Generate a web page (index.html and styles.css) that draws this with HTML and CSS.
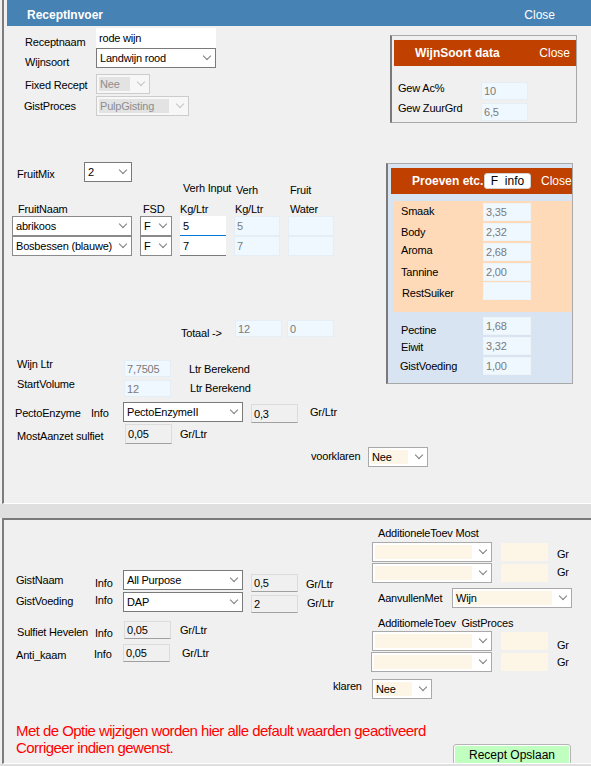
FILE: index.html
```html
<!DOCTYPE html>
<html>
<head>
<meta charset="utf-8">
<title>ReceptInvoer</title>
<link rel="stylesheet" href="styles.css">
</head>
<body>
<div class="window top">
  <div class="titlebar"><span class="title">ReceptInvoer</span><span class="close">Close</span></div>

  <div class="row row-naam">
    <span class="lbl l-naam">Receptnaam</span>
    <div class="tb tb-white w120">rode wijn</div>
  </div>
  <div class="row row-soort">
    <span class="lbl l-soort">Wijnsoort</span>
    <div class="cb w120"><span class="cb-text">Landwijn rood</span></div>
  </div>
  <div class="row row-fixed">
    <span class="lbl l-fixed">Fixed Recept</span>
    <div class="cb cb-dis w54"><span class="cb-text">Nee</span></div>
  </div>
  <div class="row row-gist">
    <span class="lbl l-gist">GistProces</span>
    <div class="cb cb-dis w93"><span class="cb-text">PulpGisting</span></div>
  </div>

  <div class="row row-mix">
    <span class="lbl l-mix">FruitMix</span>
    <div class="cb w48"><span class="cb-text">2</span></div>
  </div>

  <div class="fruit-grid">
    <div></div><div></div>
    <div class="gh1 gh-verhinput">Verh Input</div>
    <div class="gh1 gh-verh">Verh</div>
    <div class="gh1 gh-fruit">Fruit</div>

    <div class="gh2 gh-naam">FruitNaam</div>
    <div class="gh2 gh-fsd">FSD</div>
    <div class="gh2">Kg/Ltr</div>
    <div class="gh2 gh-kg2">Kg/Ltr</div>
    <div class="gh2 gh-water">Water</div>

    <div class="cb cb-fruit"><span class="cb-text">abrikoos</span></div>
    <div class="cb cb-fruit"><span class="cb-text">F</span></div>
    <div class="tb tb-focus">5</div>
    <div class="tb tb-ro">5</div>
    <div class="tb tb-ro"></div>

    <div class="cb cb-fruit"><span class="cb-text">Bosbessen (blauwe)</span></div>
    <div class="cb cb-fruit"><span class="cb-text">F</span></div>
    <div class="tb tb-under">7</div>
    <div class="tb tb-ro">7</div>
    <div class="tb tb-ro"></div>
  </div>

  <div class="row row-totaal">
    <span class="lbl l-totaal">Totaal -&gt;</span>
    <div class="tb tb-ro w47 h17">12</div>
    <div class="tb tb-ro w47 h17 gap5">0</div>
  </div>

  <div class="row row-wijn">
    <span class="lbl l-wijn">Wijn Ltr</span>
    <div class="tb tb-ro w47 h17 mt3">7,7505</div>
    <span class="lbl l-ber1">Ltr Berekend</span>
  </div>
  <div class="row row-start">
    <span class="lbl l-wijn">StartVolume</span>
    <div class="tb tb-ro w47 h17 mt3">12</div>
    <span class="lbl l-ber2">Ltr Berekend</span>
  </div>

  <div class="row row-pecto">
    <span class="lbl l-pecto">PectoEnzyme</span>
    <span class="lbl l-info-p">Info</span>
    <div class="cb w120"><span class="cb-text">PectoEnzymeII</span></div>
    <div class="tb tb-gray w47 h19 ml8 mt2">0,3</div>
    <span class="lbl l-gr-p">Gr/Ltr</span>
  </div>
  <div class="row row-most">
    <span class="lbl l-most">MostAanzet sulfiet</span>
    <div class="tb tb-gray w47 h20">0,05</div>
    <span class="lbl l-gr-m">Gr/Ltr</span>
  </div>
  <div class="row row-voor">
    <span class="lbl l-voor">voorklaren</span>
    <div class="cb cb-peach w60"><span class="cb-text">Nee</span></div>
  </div>

  <div class="subwin ws">
    <div class="sw-head"><span class="title">WijnSoort data</span><span>Close</span></div>
    <div class="row ws-row1">
      <span class="lbl l-ws">Gew Ac%</span>
      <div class="tb tb-ro w47 h18 mt1">10</div>
    </div>
    <div class="row ws-row2">
      <span class="lbl l-ws">Gew ZuurGrd</span>
      <div class="tb tb-ro w47 h18 mt2">6,5</div>
    </div>
  </div>

  <div class="subwin pv">
    <div class="sw-head pv-head">
      <span class="title pv-title">Proeven etc.</span>
      <span class="finfo">F&nbsp; info</span>
      <span class="pv-close">Close</span>
    </div>
    <div class="pv-peach">
      <div class="row pv-row"><span class="lbl l-pv pt1">Smaak</span><div class="tb tb-ro tb-pv">3,35</div></div>
      <div class="row pv-row mt2"><span class="lbl l-pv pt2">Body</span><div class="tb tb-ro tb-pv">2,32</div></div>
      <div class="row pv-row mt2"><span class="lbl l-pv">Aroma</span><div class="tb tb-ro tb-pv">2,68</div></div>
      <div class="row pv-row mt2"><span class="lbl l-pv pt2">Tannine</span><div class="tb tb-ro tb-pv">2,00</div></div>
      <div class="row pv-row mt1"><span class="lbl l-pv l-rest">RestSuiker</span><div class="tb tb-ro tb-pv"></div></div>
    </div>
    <div class="pv-lower">
      <div class="row pv-row"><span class="lbl l-pv pt6">Pectine</span><div class="tb tb-ro tb-pv">1,68</div></div>
      <div class="row pv-row mt2"><span class="lbl l-pv pt3">Eiwit</span><div class="tb tb-ro tb-pv">3,32</div></div>
      <div class="row pv-row mt2"><span class="lbl l-pv l-gv pt2">GistVoeding</span><div class="tb tb-ro tb-pv">1,00</div></div>
    </div>
  </div>
</div>

<div class="window bottom">
  <div class="bmain">
    <div class="bleft">
      <div class="row row-gn">
        <span class="lbl l-gn">GistNaam</span>
        <span class="lbl l-info-gn">Info</span>
        <div class="cb w120"><span class="cb-text">All Purpose</span></div>
        <div class="tb tb-gray w47 h18 ml8 mt4">0,5</div>
        <span class="lbl l-gr-gn">Gr/Ltr</span>
      </div>
      <div class="row row-gv">
        <span class="lbl l-gv2">GistVoeding</span>
        <span class="lbl l-info-gv">Info</span>
        <div class="cb w120"><span class="cb-text">DAP</span></div>
        <div class="tb tb-gray w47 h18 ml8 mt3">2</div>
        <span class="lbl l-gr-gv">Gr/Ltr</span>
      </div>
      <div class="row row-sh">
        <span class="lbl l-sh">Sulfiet Hevelen</span>
        <span class="lbl l-info-sh">Info</span>
        <div class="tb tb-gray w47 h18">0,05</div>
        <span class="lbl l-gr-sh">Gr/Ltr</span>
      </div>
      <div class="row row-ak">
        <span class="lbl l-ak">Anti_kaam</span>
        <span class="lbl l-info-ak">Info</span>
        <div class="tb tb-gray w47 h18">0,05</div>
        <span class="lbl l-gr-ak">Gr/Ltr</span>
      </div>
    </div>

    <div class="bright">
      <div class="lbl l-add">AdditioneleToev Most</div>
      <div class="row row-a1">
        <div class="cb cb-peach w120"><span class="cb-text"></span></div>
        <div class="tb tb-peach w47 h18 ml9 mt1"></div>
        <span class="lbl l-gr pt5">Gr</span>
      </div>
      <div class="row row-a2">
        <div class="cb cb-peach w120"><span class="cb-text"></span></div>
        <div class="tb tb-peach w47 h18 ml9 mt1"></div>
        <span class="lbl l-gr pt2">Gr</span>
      </div>
      <div class="row row-aanv">
        <span class="lbl l-aanv">AanvullenMet</span>
        <div class="cb cb-peach w120"><span class="cb-text">Wijn</span></div>
      </div>
      <div class="lbl l-add l-add2">AdditiomeleToev  GistProces</div>
      <div class="row row-a2">
        <div class="cb cb-peach w120"><span class="cb-text"></span></div>
        <div class="tb tb-peach w47 h18 ml9 mt1"></div>
        <span class="lbl l-gr pt7">Gr</span>
      </div>
      <div class="row row-a2 row-g2">
        <div class="cb cb-peach w121"><span class="cb-text"></span></div>
        <div class="tb tb-peach w47 h18 ml9 mt1"></div>
        <span class="lbl l-gr pt3">Gr</span>
      </div>
    </div>
  </div>

  <div class="row row-klaren">
    <span class="lbl l-klaren">klaren</span>
    <div class="cb cb-peach w60"><span class="cb-text">Nee</span></div>
  </div>

  <div class="warn">
    <div class="warn1">Met de Optie wijzigen worden hier alle default waarden geactiveerd</div>
    <div class="warn2">
      <span>Corrigeer indien gewenst.</span>
      <div class="btn-save"><span>Recept Opslaan</span></div>
    </div>
  </div>
</div>
</body>
</html>
```

FILE: styles.css
```css
* { box-sizing: border-box; }
html, body { margin: 0; padding: 0; }
body {
  width: 591px;
  height: 766px;
  overflow: hidden;
  background: #dfdfdf;
  font-family: "Liberation Sans", Arial, sans-serif;
  font-size: 11px;
  letter-spacing: -0.2px;
  color: #000;
}

/* windows / panels */
.window {
  position: relative;
  background: #f0f0f0;
  margin-left: 2px;
  border-left: 2px solid #7c7c7c;
  box-shadow: -2px 0 0 #f0f0f0;
}
.top { height: 504px; border-bottom: 1px solid #fff; }
.bottom {
  margin-top: 14px;
  height: 246px;
  border-top: 2px solid #7a7a7a;
  border-bottom: 1px solid #fff;
  overflow: hidden;
}

.titlebar {
  margin-left: 3px;
  height: 26px;
  background: #4682b4;
  color: #fff;
  display: flex;
  justify-content: space-between;
  align-items: center;
  padding: 3px 36px 0 20px;
  font-size: 12px;
  letter-spacing: 0;
}
.title { font-weight: bold; }

/* generic */
.row { display: flex; align-items: flex-start; }
.lbl { line-height: 14px; white-space: pre; flex: none; }

.w47 { width: 47px; }
.w48 { width: 48px; }
.w54 { width: 54px; }
.w60 { width: 60px; }
.w93 { width: 93px; }
.w120 { width: 120px; }
.w121 { width: 121px; }
.h17 { height: 17px; }
.h18 { height: 18px; }
.h19 { height: 19px; }
.h20 { height: 20px; }
.mt1 { margin-top: 1px; }
.mt2 { margin-top: 2px; }
.mt3 { margin-top: 3px; }
.mt4 { margin-top: 4px; }
.ml8 { margin-left: 8px; }
.ml9 { margin-left: 9px; }
.gap5 { margin-left: 5px; }
.pt1 { padding-top: 1px; }
.pt2 { padding-top: 2px; }
.pt3 { padding-top: 3px; }
.pt5 { padding-top: 5px; }
.pt6 { padding-top: 6px; }
.pt7 { padding-top: 7px; }

/* combobox */
.cb {
  position: relative;
  flex: none;
  display: flex;
  align-items: stretch;
  height: 20px;
  border: 1px solid #7a7a7a;
  background: #fff;
  padding: 2px;
}
.cb-text {
  flex: 1;
  margin-right: 17px;
  padding-left: 1px;
  line-height: 14px;
  white-space: nowrap;
  overflow: hidden;
}
.cb::after {
  content: "";
  position: absolute;
  right: 5px;
  top: 4px;
  width: 5px;
  height: 5px;
  border-right: 1px solid #7d7d7d;
  border-bottom: 1px solid #7d7d7d;
  transform: rotate(45deg);
}
.cb-dis { border-color: #cccccc; background: #f7f7f7; color: #8d8d8d; }
.cb-dis .cb-text { background: #e3e3e3; }
.cb-dis::after { border-color: #c4c4c4; }
.cb-peach { border-color: #a9a9a9; }
.cb-peach .cb-text { background: #fdf5e6; }
.cb-fruit { height: 20px; border-color: #8a8a8a; }
.cb-fruit .cb-text { margin-right: 15px; }

/* textbox */
.tb {
  flex: none;
  display: flex;
  align-items: center;
  padding-left: 2px;
  white-space: nowrap;
}
.tb-white { background: #fff; height: 20px; padding-left: 3px; }
.tb-focus { background: #fff; border-bottom: 1px solid #0078d7; padding-left: 3px; }
.tb-under { background: #fff; border-bottom: 1px solid #7a7a7a; padding-left: 3px; }
.tb-ro { background: #f0f8ff; border: 1px solid #e5edf5; color: #7a7a7a; padding-left: 2px; }
.tb-gray { background: #f0f0f0; border: 1px solid #dcdcdc; border-bottom-color: #a0a0a0; padding-left: 2px; }
.tb-peach { background: #fdf5e6; }

/* top panel rows */
.row-naam { margin: 2px 0 0 21px; height: 20px; }
.l-naam { width: 71px; padding-top: 7px; }
.row-soort { margin-left: 21px; height: 20px; }
.l-soort { width: 71px; padding-top: 7px; }
.row-fixed { margin: 6px 0 0 21px; height: 20px; }
.l-fixed { width: 71px; padding-top: 4px; }
.row-gist { margin: 2px 0 0 20px; height: 20px; }
.l-gist { width: 72px; padding-top: 3px; }
.row-mix { margin: 46px 0 0 13px; height: 20px; }
.l-mix { width: 67px; padding-top: 5px; }

.fruit-grid {
  margin-left: 8px;
  display: grid;
  grid-template-columns: 120px 32px 46px 46px 46px;
  grid-template-rows: 16px 18px 20px 20px;
  column-gap: 8px;
}
.gh1 { line-height: 16px; white-space: nowrap; }
.gh-verhinput { line-height: 12px; padding-left: 3px; }
.gh-verh { padding-left: 2px; }
.gh-fruit { padding-left: 2px; }
.gh2 { align-self: end; line-height: 14px; white-space: nowrap; }
.gh-naam { padding-left: 6px; }
.gh-fsd { padding-left: 3px; }
.gh-kg2 { padding-left: 1px; }
.gh-water { padding-left: 2px; }

.row-totaal { margin: 64px 0 0 177px; height: 17px; }
.l-totaal { width: 54px; padding-top: 6px; }

.row-wijn { margin: 20px 0 0 13px; height: 20px; }
.row-start { margin-left: 13px; height: 20px; }
.l-wijn { width: 107px; }
.l-ber1 { margin-left: 18px; padding-top: 5px; }
.l-ber2 { margin-left: 19px; padding-top: 4px; }

.row-pecto { margin: 5px 0 0 11px; height: 21px; }
.l-pecto { width: 76px; padding-top: 4px; }
.l-info-p { width: 32px; padding-top: 4px; }
.l-gr-p { margin-left: 12px; padding-top: 3px; }
.row-most { margin: 1px 0 0 13px; height: 20px; }
.l-most { width: 108px; padding-top: 5px; }
.l-gr-m { margin-left: 8px; padding-top: 3px; }
.row-voor { margin: 3px 0 0 307px; height: 20px; }
.l-voor { width: 57px; padding-top: 2px; }

/* floating sub windows */
.subwin {
  position: absolute;
  background: #f0f0f0;
  border: 1px solid #a9a9a9;
  border-left: 2px solid #7a7a7a;
  padding: 4px 0 0 2px;
}
.ws { left: 386px; top: 35px; width: 187px; height: 88px; }
.sw-head {
  height: 26px;
  background: #c04000;
  color: #fff;
  font-size: 12px;
  letter-spacing: 0;
  display: flex;
  align-items: center;
  justify-content: space-between;
  padding: 0 6px 0 21px;
}
.ws-row1 { margin: 15px 0 0 4px; height: 19px; }
.ws-row2 { margin: 1px 0 0 4px; height: 20px; }
.l-ws { width: 83px; }

.pv { left: 382px; top: 163px; width: 187px; height: 221px; background: #d8e4f1; padding: 4px 0 0 3px; }
.pv-head { justify-content: flex-start; padding: 0 0 0 21px; }
.pv-title { width: 72px; white-space: nowrap; }
.finfo {
  width: 47px;
  height: 16px;
  background: #fff;
  border: 1px solid #d0d0d0;
  border-radius: 3px;
  color: #000;
  text-align: center;
  line-height: 14px;
}
.pv-close { margin-left: 10px; }
.pv-peach { margin: 7px 0 0 2px; height: 111px; background: #ffdab9; padding: 2px 0 0 8px; }
.pv-lower { margin: 5px 0 0 10px; }
.pv-row { height: 18px; }
.l-pv { width: 82px; }
.l-rest { padding: 4px 0 0 1px; }
.l-gv { margin-left: -1px; width: 83px; }
.tb-pv { width: 48px; height: 18px; border-color: #eef3f8; }

/* bottom panel */
.bmain { display: flex; align-items: flex-start; }
.bleft { width: 368px; flex: none; padding-top: 50px; }
.bright { padding-top: 6px; }

.row-gn { margin-left: 12px; height: 22px; }
.l-gn { width: 79px; padding-top: 3px; }
.l-info-gn { width: 28px; padding-top: 6px; }
.l-gr-gn { margin-left: 8px; padding-top: 7px; }
.row-gv { margin-left: 12px; height: 21px; }
.l-gv2 { width: 79px; padding-top: 2px; }
.l-info-gv { width: 28px; padding-top: 1px; }
.l-gr-gv { margin-left: 9px; padding-top: 4px; }
.row-sh { margin: 8px 0 0 13px; height: 18px; }
.l-sh { width: 78px; padding-top: 4px; }
.l-info-sh { width: 29px; padding-top: 5px; }
.l-gr-sh { margin-left: 9px; padding-top: 2px; }
.row-ak { margin: 5px 0 0 12px; height: 18px; }
.l-ak { width: 78px; padding-top: 4px; }
.l-info-ak { width: 29px; padding-top: 3px; }
.l-gr-ak { margin-left: 12px; padding-top: 2px; }

.l-add { margin-left: 6px; }
.l-add2 { margin-top: 8px; }
.row-a1 { margin-top: 2px; height: 20px; }
.row-a2 { margin-top: 1px; height: 20px; }
.row-g2 { margin-left: -1px; }
.l-gr { margin-left: 9px; }
.row-aanv { margin-top: 5px; height: 20px; }
.l-aanv { margin-left: 6px; width: 74px; padding-top: 3px; }

.row-klaren { margin: 7px 0 0 329px; height: 20px; }
.l-klaren { width: 39px; }

.warn {
  margin-left: 12px;
  color: #ff0000;
  font-size: 15px;
  letter-spacing: -0.55px;
  line-height: 17px;
}
.warn1 { margin-top: 23px; white-space: nowrap; }
.warn2 { display: flex; align-items: flex-start; }
.btn-save {
  margin: 5px 20px 0 auto;
  width: 118px;
  height: 24px;
  border: 1px solid #b5b5b5;
  border-radius: 3px;
  background: #fff;
  padding: 1px;
  font-size: 12px;
  letter-spacing: 0;
  color: #000;
}
.btn-save span {
  display: block;
  height: 100%;
  background: #c0ffc0;
  text-align: center;
  line-height: 19px;
}
```
